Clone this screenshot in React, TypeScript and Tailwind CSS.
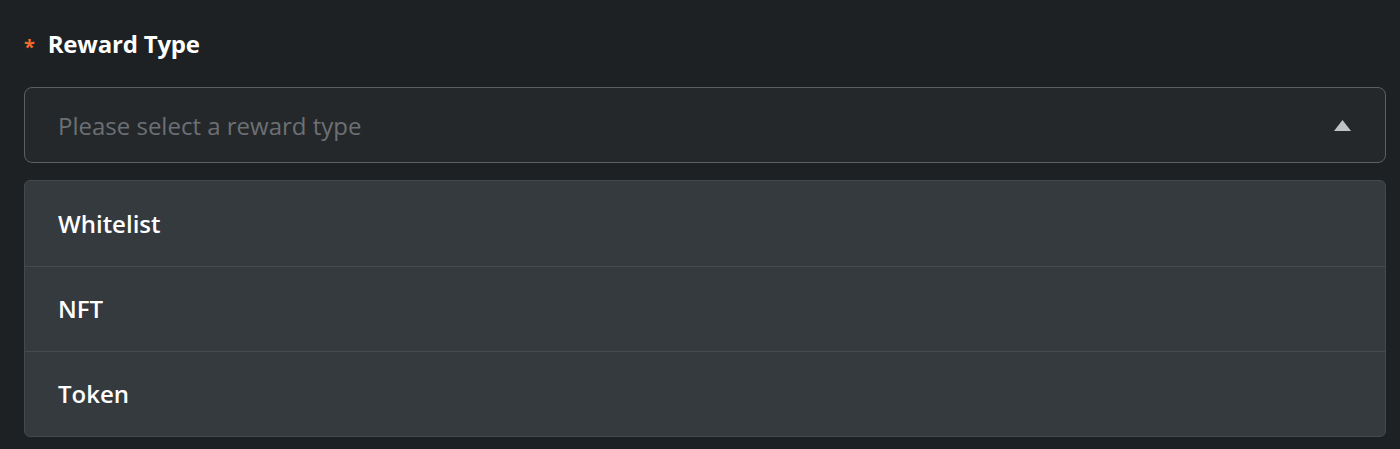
import { useState } from 'react';

const options = ['Whitelist', 'NFT', 'Token'];

export default function App() {
  const [value, setValue] = useState<string | null>(null);

  return (
    <div className="min-h-[449px] bg-[#1e2124] pl-6 pr-[14px] pt-[28px] font-['Open_Sans','Noto_Sans',sans-serif]">
      <label className="flex items-center gap-[13px] text-[24px] font-bold leading-8 tracking-[-0.2px] text-white">
        <span className="mt-[6px] text-[20px] font-bold leading-none text-[#f26a2e]">*</span>
        Reward Type
      </label>

      <button
        type="button"
        className="mt-[27px] flex h-[76px] w-full items-center justify-between rounded-lg border border-[#5b6064] bg-[#25282b] pl-[33px] pr-[34px] text-left"
      >
        <span className={`pt-[2px] text-[24px] leading-8 ${value ? 'text-white' : 'text-[#6c7074]'}`}>
          {value ?? 'Please select a reward type'}
        </span>
        <svg width="17" height="11" viewBox="0 0 17 11" aria-hidden="true">
          <path d="M8.5 0 17 11H0z" fill="#c0c2c4" />
        </svg>
      </button>

      <ul className="mt-[17px] overflow-hidden rounded-md border border-[#44494d] bg-[#353a3e]">
        {options.map((option, i) => (
          <li
            key={option}
            onClick={() => setValue(option)}
            className={`flex h-[85px] cursor-pointer items-center pl-[33px] text-[24px] font-semibold text-white ${
              i > 0 ? 'border-t border-[#464b4f]' : ''
            }`}
          >
            {option}
          </li>
        ))}
      </ul>
    </div>
  );
}
